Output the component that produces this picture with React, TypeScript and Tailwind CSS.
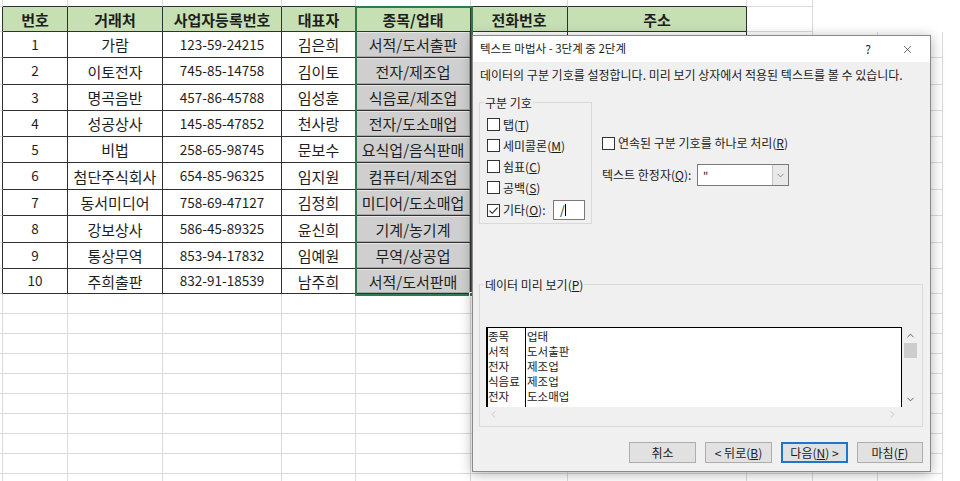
import React from "react";
import { X, ChevronUp, ChevronDown, ChevronLeft, ChevronRight } from "lucide-react";

const COLS = [3, 65, 95, 119, 74, 115, 97, 179, 66, 65, 65, 17];
const DATA_H = [26, 27, 26, 26, 26, 27, 26, 27, 26, 25];
const ROW_H = [7, 25, ...DATA_H, 20, 20, 20, 20, 20, 20, 20, 20, 20, 20];

const HEADER = ["번호", "거래처", "사업자등록번호", "대표자", "종목/업태", "전화번호", "주소"];
const DATA = [
  ["1", "가람", "123-59-24215", "김은희", "서적/도서출판"],
  ["2", "이토전자", "745-85-14758", "김이토", "전자/제조업"],
  ["3", "명곡음반", "457-86-45788", "임성훈", "식음료/제조업"],
  ["4", "성공상사", "145-85-47852", "천사랑", "전자/도소매업"],
  ["5", "비법", "258-65-98745", "문보수", "요식업/음식판매"],
  ["6", "첨단주식회사", "654-85-96325", "임지원", "컴퓨터/제조업"],
  ["7", "동서미디어", "758-69-47127", "김정희", "미디어/도소매업"],
  ["8", "강보상사", "586-45-89325", "윤신희", "기계/농기계"],
  ["9", "통상무역", "853-94-17832", "임예원", "무역/상공업"],
  ["10", "주희출판", "832-91-18539", "남주희", "서적/도서판매"],
];

const RB: Record<string, string> = {
  table: "border-r border-r-[#303030]",
  grid: "border-r border-r-[#dadada]",
  none: "",
};
const BB: Record<string, string> = {
  table: "border-b border-b-[#303030]",
  grid: "border-b border-b-[#dadada]",
  none: "",
};

function Cell({ r, c }: { r: number; c: number }) {
  let right = "grid";
  let bottom = "grid";
  if (r >= 1 && r <= 11 && c >= 0 && c <= 7) right = "table";
  if (c >= 1 && c <= 7 && r >= 0 && r <= 11) bottom = "table";
  if (r <= 1 && c >= 9) {
    right = "none";
    bottom = "none";
  }
  if (c === 11) {
    right = "none";
    bottom = "none";
  }
  let bg = "";
  let text = "";
  let bold = "";
  let size = "text-[15px]";
  if (r === 1 && c >= 1 && c <= 7) {
    bg = "bg-[#c6e0b4]";
    text = HEADER[c - 1];
    bold = "font-bold";
  } else if (r >= 2 && r <= 11) {
    if (c >= 1 && c <= 5) text = DATA[r - 2][c - 1];
    if (c === 1 || c === 3) size = "text-[13.5px]";
    if (c === 5) bg = "bg-[#cfcfcf] shadow-[inset_-1px_-1px_0_#a9a9a9,inset_1px_1px_0_#e6e6e6]";
  }
  return (
    <div
      className={`shrink-0 h-full flex items-center justify-center whitespace-nowrap overflow-hidden ${size} ${RB[right]} ${BB[bottom]} ${bg} ${bold}`}
      style={{ width: COLS[c] }}
    >
      {text}
    </div>
  );
}

function Check({ checked }: { checked?: boolean }) {
  return (
    <span className="w-[13px] h-[13px] border border-[#333333] bg-white flex items-center justify-center shrink-0">
      {checked && (
        <svg width="11" height="11" viewBox="0 0 11 11">
          <path d="M1.5 5.6 L4.2 8.3 L9.6 2.6" fill="none" stroke="#222" strokeWidth="1.1" />
        </svg>
      )}
    </span>
  );
}

function Mn({ ch }: { ch: string }) {
  return (
    <>
      (<span className="underline underline-offset-[1px]">{ch}</span>)
    </>
  );
}

function Dialog() {
  const preview = [
    ["종목", "업태"],
    ["서적", "도서출판"],
    ["전자", "제조업"],
    ["식음료", "제조업"],
    ["전자", "도소매업"],
  ];
  return (
    <div className="absolute left-[472px] top-[35px] w-[459px] h-[437px] border border-[#8a8a8a] bg-[#f0f0f0] shadow-[0_2px_12px_rgba(0,0,0,0.3)] flex flex-col text-[12px] text-[#1b1b1b] leading-none">
      <div className="h-[26px] shrink-0 bg-white flex items-center pl-[7px] pr-[16px]">
        <span className="text-[11.5px]">텍스트 마법사 - 3단계 중 2단계</span>
        <span className="ml-auto w-[10px] text-center text-[12px]">?</span>
        <X size={13} strokeWidth={1.2} className="ml-[28px] text-[#222]" />
      </div>
      <div className="flex-1 pl-[6px] pr-[7px] pt-[6px] flex flex-col">
        <p className="h-[14px] leading-[14px] pl-[1px] whitespace-nowrap">
          데이터의 구분 기호를 설정합니다. 미리 보기 상자에서 적용된 텍스트를 볼 수 있습니다.
        </p>
        <div className="mt-[20px] flex">
          <div className="relative w-[113px] h-[122px] border border-[#d9d9d9] pt-[11px] pl-[7px] pr-[6px]">
            <span className="absolute -top-[7px] left-[4px] px-[1px] h-[14px] leading-[14px] bg-[#f0f0f0]">구분 기호</span>
            <div className="h-[21px] flex items-center gap-[3px]">
              <Check />
              <span>탭<Mn ch="T" /></span>
            </div>
            <div className="h-[21px] flex items-center gap-[3px]">
              <Check />
              <span>세미콜론<Mn ch="M" /></span>
            </div>
            <div className="h-[21px] flex items-center gap-[3px]">
              <Check />
              <span>쉼표<Mn ch="C" /></span>
            </div>
            <div className="h-[21px] flex items-center gap-[3px]">
              <Check />
              <span>공백<Mn ch="S" /></span>
            </div>
            <div className="h-[24px] flex items-center gap-[3px]">
              <Check checked />
              <span className="whitespace-nowrap">기타<Mn ch="O" />:</span>
              <div className="ml-auto w-[32px] h-[20px] shrink-0 border border-[#7a7a7a] bg-white flex items-center pl-[6px]">
                <span className="text-[12px]">/</span>
                <span className="w-[1px] h-[12px] bg-black" />
              </div>
            </div>
          </div>
          <div className="ml-[10px] flex flex-col">
            <div className="mt-[33px] h-[16px] flex items-center gap-[3px]">
              <Check />
              <span>연속된 구분 기호를 하나로 처리<Mn ch="R" /></span>
            </div>
            <div className="mt-[13px] h-[22px] flex items-center">
              <span className="w-[95px] whitespace-nowrap">텍스트 한정자<Mn ch="Q" />:</span>
              <div className="w-[92px] h-[22px] border border-[#7a7a7a] bg-white flex">
                <span className="flex-1 pl-[5px] pt-[5px] text-[11px]">"</span>
                <span className="w-[16px] h-full bg-[#e9e9e9] border-l border-l-[#c4c4c4] flex items-center justify-center">
                  <ChevronDown size={11} strokeWidth={1.4} className="text-[#555]" />
                </span>
              </div>
            </div>
          </div>
        </div>
        <div className="mt-[60px] relative h-[143px] border border-[#d9d9d9] pt-[42px] pl-[6px]">
          <span className="absolute -top-[7px] left-[4px] px-[1px] h-[14px] leading-[14px] bg-[#f0f0f0]">
            데이터 미리 보기<Mn ch="P" />
          </span>
          <div className="flex">
            <div className="w-[416px] h-[80px] border-l-2 border-t border-r border-black bg-white flex">
              <div className="w-[38px] h-full border-r border-black">
                {preview.map((p, i) => (
                  <div key={i} className="h-[15px] leading-[15px] text-[11.5px] pt-[1px] whitespace-nowrap">{p[0]}</div>
                ))}
              </div>
              <div className="flex-1 pl-[1px]">
                {preview.map((p, i) => (
                  <div key={i} className="h-[15px] leading-[15px] text-[11.5px] pt-[1px]">{p[1]}</div>
                ))}
              </div>
            </div>
            <div className="w-[16px] h-[80px] flex flex-col items-center">
              <div className="h-[16px] flex items-center justify-center">
                <ChevronUp size={11} strokeWidth={2} className="text-[#555]" />
              </div>
              <div className="w-[13px] h-[15px] bg-[#cdcdcd]" />
              <div className="mt-auto h-[16px] flex items-center justify-center">
                <ChevronDown size={11} strokeWidth={2} className="text-[#555]" />
              </div>
            </div>
          </div>
          <div className="w-[416px] h-[15px] flex items-center justify-between pl-[2px] pr-[4px]">
            <ChevronLeft size={11} strokeWidth={2} className="text-[#c2c2c2]" />
            <ChevronRight size={11} strokeWidth={2} className="text-[#c2c2c2]" />
          </div>
        </div>
        <div className="mt-[15px] flex justify-end gap-[9px]">
          <div className="w-[67px] h-[21px] bg-[#e1e1e1] border border-[#adadad] flex items-center justify-center">취소</div>
          <div className="w-[67px] h-[21px] bg-[#e1e1e1] border border-[#adadad] flex items-center justify-center">
            &lt; 뒤로<Mn ch="B" />
          </div>
          <div className="w-[67px] h-[21px] bg-[#e1e1e1] border-2 border-[#1f74cc] flex items-center justify-center">
            다음<Mn ch="N" />&nbsp;&gt;
          </div>
          <div className="w-[66px] h-[21px] bg-[#e1e1e1] border border-[#adadad] flex items-center justify-center">
            마침<Mn ch="F" />
          </div>
        </div>
      </div>
    </div>
  );
}

export default function App() {
  return (
    <div className="relative w-[960px] h-[481px] overflow-hidden bg-white font-['Noto_Sans_CJK_KR',sans-serif] text-[#1e1e1e]">
      <div className="flex flex-col leading-none">
        {ROW_H.map((h, r) => (
          <div key={r} className="flex shrink-0" style={{ height: h }}>
            {COLS.map((_, c) => (
              <Cell key={c} r={r} c={c} />
            ))}
          </div>
        ))}
      </div>
      <div className="absolute left-[355px] top-[6px] w-[118px] h-[290px] border-2 border-[#2f7a49] pointer-events-none" />
      <div className="absolute left-[469px] top-[292px] w-[5px] h-[5px] bg-[#2f7a49] border border-white pointer-events-none" />
      <Dialog />
    </div>
  );
}
